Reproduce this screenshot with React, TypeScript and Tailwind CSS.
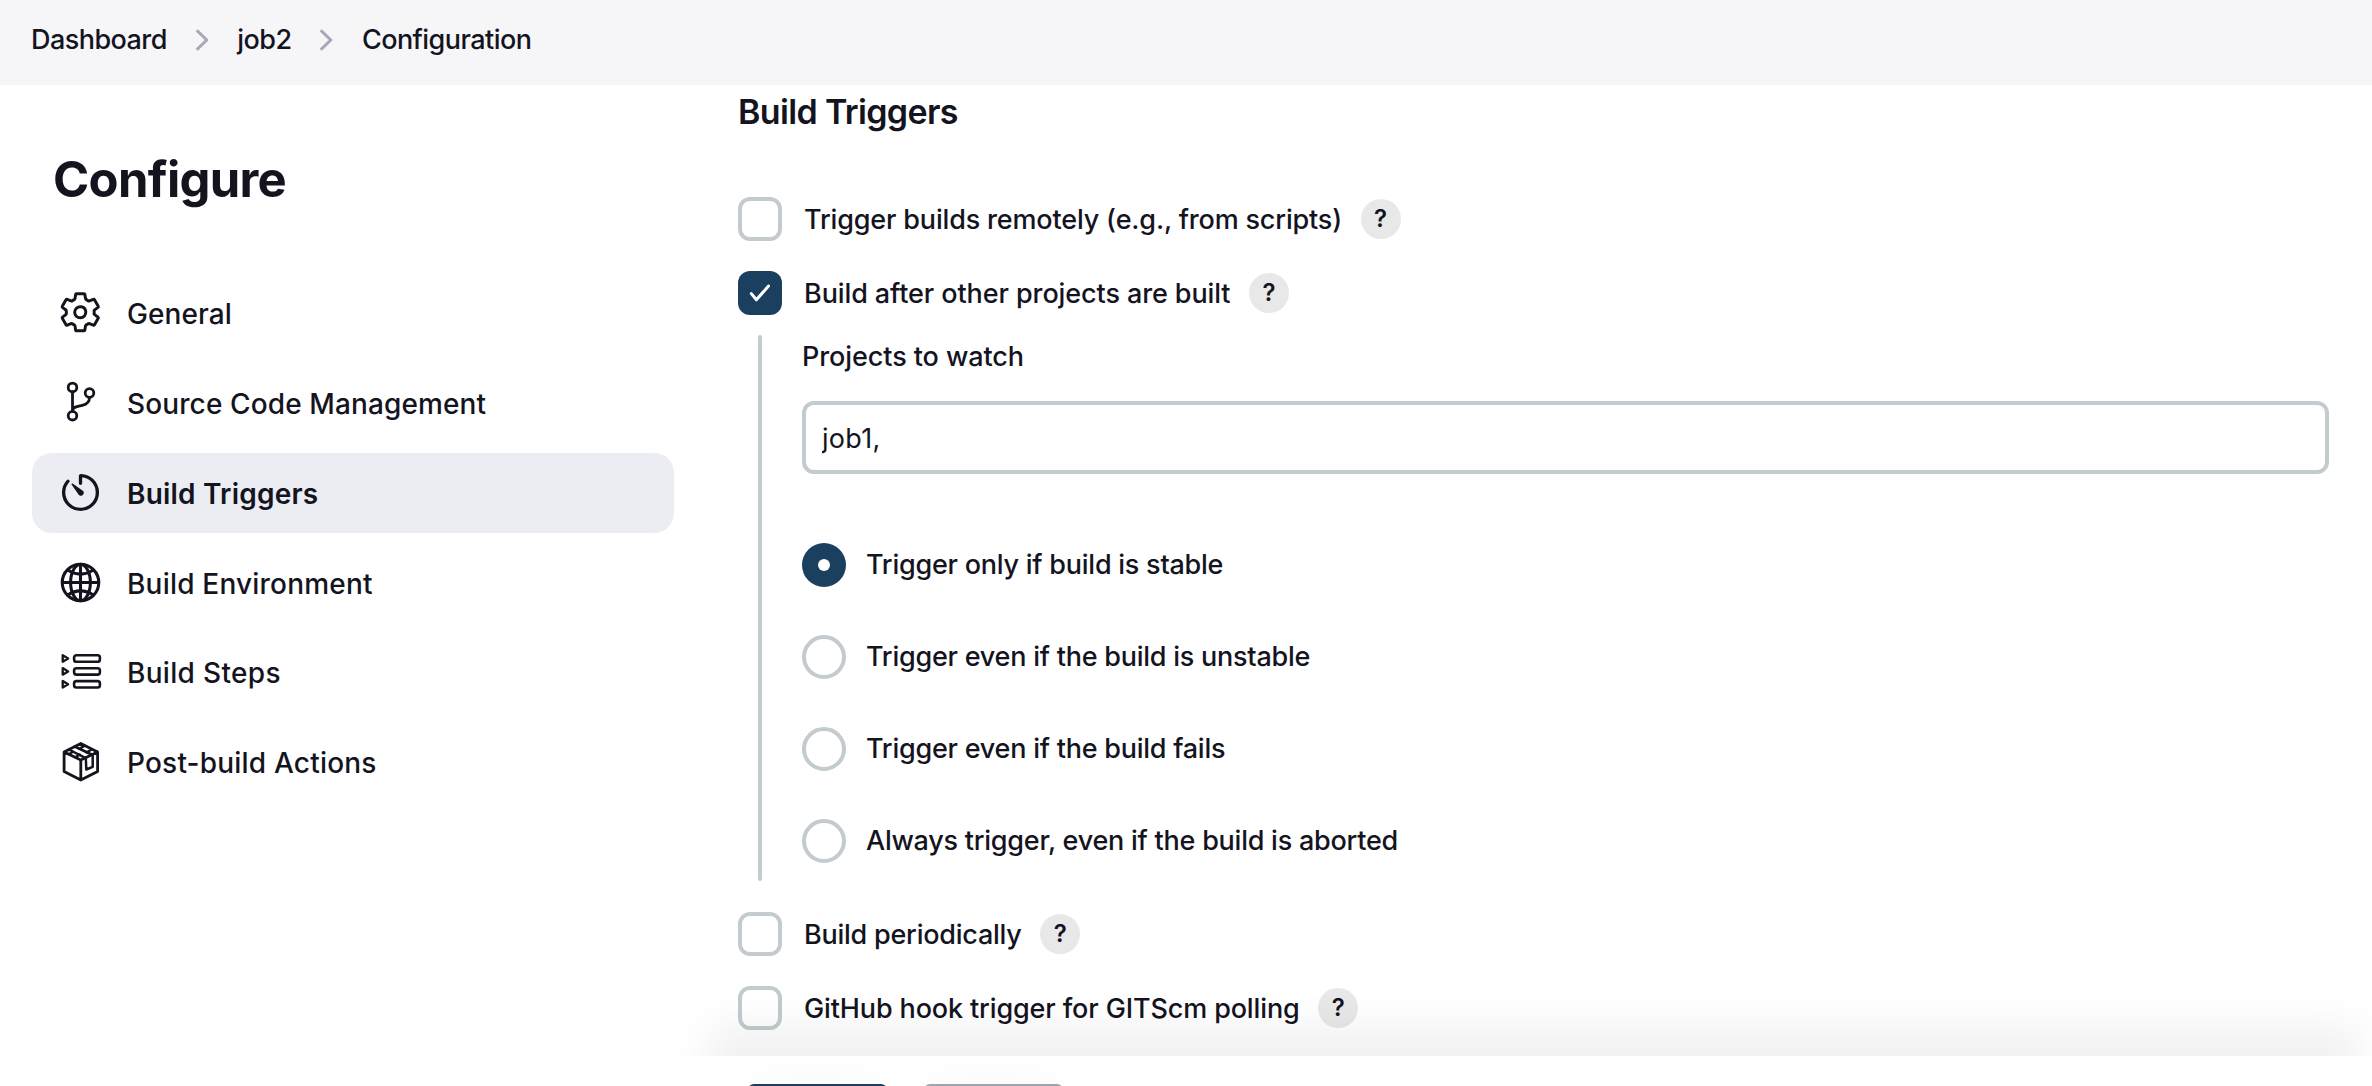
import type { ReactNode } from "react";
import { IoGlobeOutline, IoSettingsOutline, IoTimerOutline } from "react-icons/io5";

function BranchIcon() {
  return (
    <svg viewBox="0 0 44 44" className="size-11" fill="none" stroke="currentColor" strokeWidth="2.8" strokeLinecap="round">
      <circle cx="13.5" cy="7.4" r="4.3" />
      <circle cx="13.5" cy="35.7" r="4.3" />
      <circle cx="30.5" cy="13" r="4.3" />
      <path d="M13.5 11.8V31.3M30.5 17.5c0 4.8-3.4 7-7.2 7.9-4.6 1.1-9.8 1.3-9.8 5.3" />
    </svg>
  );
}

function StepsIcon() {
  return (
    <svg viewBox="0 0 44 44" className="size-11" fill="none" stroke="currentColor" strokeWidth="2.6" strokeLinejoin="round">
      <rect x="15.1" y="5.3" width="25.8" height="6.4" rx="2.3" />
      <rect x="15.1" y="18.2" width="25.8" height="6.4" rx="2.3" />
      <rect x="15.1" y="31.1" width="25.8" height="6.4" rx="2.3" />
      <path strokeWidth="2.3" d="M3.7 5.2v6.6l5.4-3.3zM3.7 18.1v6.6l5.4-3.3zM3.7 31v6.6l5.4-3.3z" />
    </svg>
  );
}

function PackageIcon() {
  return (
    <svg viewBox="0 0 44 44" className="size-11" fill="none" stroke="currentColor" strokeWidth="2.8" strokeLinejoin="round" strokeLinecap="round">
      <path d="M21.8 3.5 38.6 12v19.5L21.8 40 5.1 31.5V12zM5.1 12l16.7 8 16.8-8M21.8 20v20" />
      <path strokeWidth="2.5" d="M9.8 9.5 26.8 18.2l.5 11.3 6.4-2.7V15L15.6 6.5" />
      <path strokeWidth="2.4" d="M9.8 14.2l4.2-2.4M16.2 17.2l4.5-2.6M20.3 8.8l4.3-2.4M27.6 12.4l4.7-2.6" />
    </svg>
  );
}

function Chevron() {
  return (
    <svg viewBox="0 0 13 22" className="mx-[28.7px] h-[22px] w-[13px] shrink-0" fill="none" stroke="#a9a7b9" strokeWidth="3" strokeLinecap="round" strokeLinejoin="round">
      <path d="M1.6 2.2l9.2 8.8-9.2 8.8" />
    </svg>
  );
}

function Help() {
  return (
    <button className="flex size-10 items-center justify-center rounded-full bg-[#e8e8e8] text-[24px] leading-none font-semibold">
      ?
    </button>
  );
}

function CheckRow({ checked, label }: { checked?: boolean; label: ReactNode }) {
  return (
    <div className="flex h-11 items-center">
      {checked ? (
        <span className="size-11 rounded-xl bg-[#1a3f5f]">
          <svg viewBox="0 0 44 44" className="size-11" fill="none" stroke="#fff" strokeWidth="3" strokeLinecap="round" strokeLinejoin="round">
            <path d="M13.3 22.6l5.1 6.2L30.5 15" />
          </svg>
        </span>
      ) : (
        <span className="size-11 rounded-xl border-4 border-[#c3cbcf] bg-white" />
      )}
      <span className="mr-[18.6px] ml-[22px] pt-px leading-[33px] whitespace-nowrap">{label}</span>
      <Help />
    </div>
  );
}

const nav = [
  { label: "General", icon: <IoSettingsOutline className="size-[44.5px] [&_path]:[stroke-width:34]" />, spacing: "tracking-[0.07px]" },
  { label: "Source Code Management", icon: <BranchIcon />, spacing: "tracking-[0.12px]" },
  { label: "Build Triggers", icon: <IoTimerOutline className="size-[45px] [&_path:first-of-type]:[stroke-width:38]" />, spacing: "tracking-[0.2px] font-semibold", active: true },
  { label: "Build Environment", icon: <IoGlobeOutline className="size-[45px] [&_path]:[stroke-width:35]" />, spacing: "tracking-[0.2px]" },
  { label: "Build Steps", icon: <StepsIcon />, spacing: "tracking-[0.32px]" },
  { label: "Post-build Actions", icon: <PackageIcon />, spacing: "tracking-[0.2px]" },
];

const radios = [
  "Trigger only if build is stable",
  "Trigger even if the build is unstable",
  "Trigger even if the build fails",
  "Always trigger, even if the build is aborted",
];

export default function App() {
  return (
    <div className="relative h-[1086px] w-full overflow-hidden bg-white font-['Inter',sans-serif] text-[27px] font-medium text-[#14141f]">
      <header className="flex h-[85px] items-start bg-[#f6f6f8] pt-[23px] pl-[31px] leading-[33px] tracking-[-0.55px]">
        <nav className="flex items-center">
          <a>Dashboard</a>
          <Chevron />
          <a>job2</a>
          <Chevron />
          <a>Configuration</a>
        </nav>
      </header>

      <div className="flex">
        <aside className="w-[674px] shrink-0 pt-[65px] pl-8">
          <h1 className="pl-[21px] text-[49px] leading-[59px] font-bold tracking-[-0.7px]">Configure</h1>
          <ul className="mt-16 flex flex-col gap-[9.86px] text-[28px]">
            {nav.map((n) => (
              <li
                key={n.label}
                className={
                  n.active
                    ? "flex h-20 items-center rounded-[20px] bg-[#ecedf3]"
                    : "flex h-20 items-center rounded-[20px]"
                }
              >
                <span className="ml-[26px] flex w-[45px] justify-center pb-px">{n.icon}</span>
                <span className={`ml-[24px] pt-0.5 leading-[34px] ${n.spacing}`}>{n.label}</span>
              </li>
            ))}
          </ul>
        </aside>

        <main className="flex-1 pt-1.5 pr-[43px] pl-16">
          <h2 className="text-[34px] leading-[41px] font-semibold tracking-[-0.65px]">Build Triggers</h2>
          <div className="mt-[65px] flex flex-col gap-[30px]">
            <CheckRow label={<span className="tracking-[-0.17px]">Trigger builds remotely (e.g., from scripts)</span>} />
            <CheckRow checked label={<span className="tracking-[-0.1px]">Build after other projects are built</span>} />
          </div>

          <div className="mt-5 ml-5 flex h-[546px]">
            <div className="w-1 shrink-0 rounded-full bg-[#c3cbcf]" />
            <div className="ml-10 flex-1 pt-[5px]">
              <div className="leading-[33px] tracking-[-0.08px]">Projects to watch</div>
              <input
                readOnly
                value="job1,"
                className="mt-7 block h-[73px] w-full rounded-xl border-4 border-[#c3cbcf] bg-white pt-0.5 pl-4 font-normal tracking-[0.3px] outline-none"
              />
              <div className="mt-[69px] flex flex-col gap-12">
                {radios.map((r, i) => (
                  <div key={r} className="flex h-11 items-center">
                    {i === 0 ? (
                      <span className="flex size-11 items-center justify-center rounded-full bg-[#1a3f5f]">
                        <span className="size-3 rounded-full bg-white" />
                      </span>
                    ) : (
                      <span className="size-11 rounded-full border-4 border-[#c3cbcf]" />
                    )}
                    <span className="ml-5 pb-px leading-[33px] tracking-[-0.24px]">{r}</span>
                  </div>
                ))}
              </div>
            </div>
          </div>

          <div className="mt-[31px] flex flex-col gap-[30px]">
            <CheckRow label={<span className="tracking-[-0.24px]">Build periodically</span>} />
            <CheckRow label={<span className="tracking-[-0.13px]">GitHub hook trigger for GITScm polling</span>} />
          </div>
        </main>
      </div>

      <footer className="absolute right-0 bottom-0 left-[674px] h-[30px]">
        <div className="mr-[43px] ml-16 h-24 shadow-[0_0_40px_30px_rgba(0,0,0,0.058)]" />
        <div className="absolute inset-0 flex gap-[37px] overflow-hidden bg-white pt-7 pl-[74px]">
          <div className="h-[72px] w-[139px] rounded-md bg-[#1a3f5f] shadow-[0_0_50px_rgba(0,0,0,0.03)]" />
          <div className="h-[72px] w-[139px] rounded-md bg-[#9da6ae] shadow-[0_0_50px_rgba(0,0,0,0.03)]" />
        </div>
      </footer>
    </div>
  );
}
